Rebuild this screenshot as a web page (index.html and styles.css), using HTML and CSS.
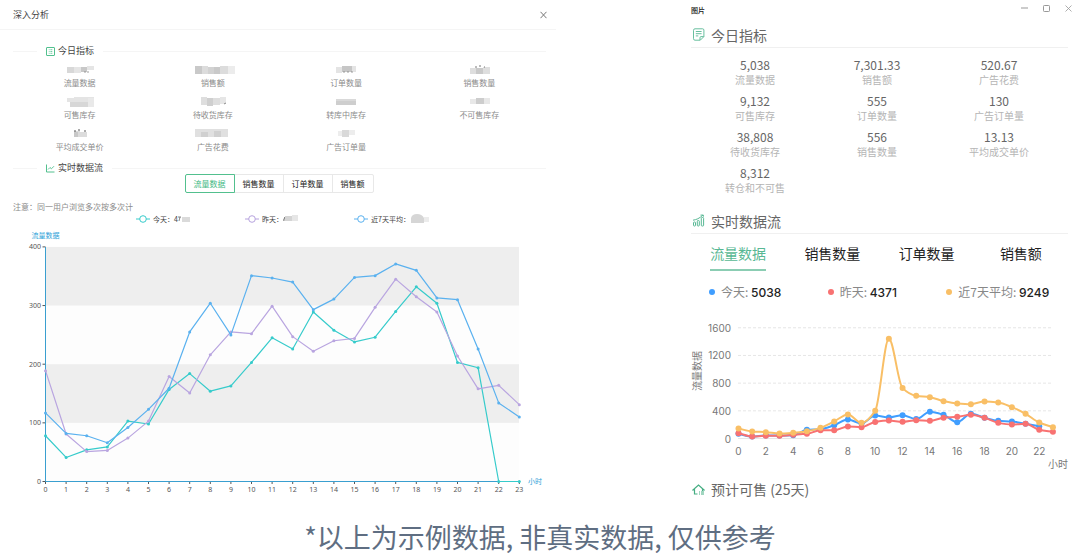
FILE: index.html
```html
<!DOCTYPE html>
<html lang="zh-CN">
<head>
<meta charset="utf-8">
<meta name="viewport" content="width=device-width, initial-scale=1">
<title>深入分析</title>
<link rel="stylesheet" href="styles.css">
</head>
<body>
<main class="compare">
  <section class="analysis">
    <header class="analysis-header">
      <h1 class="analysis-title">深入分析</h1>
      <button class="icon-button" type="button" aria-label="关闭"><svg width="7" height="8" viewBox="0 0 7 8"><path d="M.5 .8 6.5 7.2M6.5 .8 .5 7.2" fill="none" stroke="#777" stroke-width="1"/></svg></button>
    </header>
    <div class="analysis-body">
      <h2 class="divider divider-first">
        <svg width="9" height="9" viewBox="0 0 9 9" fill="none" stroke="#52c08e"><rect x=".5" y=".5" width="8" height="8" rx=".4"/><path d="M2.8 2.7h.8M4.4 2.7h1.9M2.8 4.5h.8M4.4 4.5h1.9M2.8 6.3h.8M4.4 6.3h1.9" stroke-width=".8"/></svg>
        <span>今日指标</span>
      </h2>
      <dl class="stats">
        <div class="stat"><dt>流量数据</dt><dd><svg class="mosaic" width="40" height="14" viewBox="0 0 40 14"><path fill="#d8d8d8" d="M7 4h7v6H7z"/><path fill="#e5e5e5" d="M14 4h7v6h-7zM27 3h7v4h-7z"/><path fill="#c8c8c8" d="M21 4h6v5h-6z"/><path d="M24 9h2M27 9h2" stroke="#777" stroke-width=".7"/></svg></dd></div>
        <div class="stat"><dt>销售额</dt><dd><svg class="mosaic" width="40" height="14" viewBox="0 0 40 14"><path fill="#c9c9c9" d="M2 3h7v8H2zM21 4h6v7h-6z"/><path fill="#dcdcdc" d="M9 3h6v8H9zM27 3h8v8h-8z"/><path fill="#d2d2d2" d="M15 4h6v7h-6z"/><path fill="#ececec" d="M35 3h7v8h-7z"/></svg></dd></div>
        <div class="stat"><dt>订单数量</dt><dd><svg class="mosaic" width="40" height="14" viewBox="0 0 40 14"><path fill="#e4e4e4" d="M10 4h6v6h-6zM26 3h4v6h-4z"/><path fill="#c6c6c6" d="M16 3h10v6H16z"/><path d="M17 9h2M21 9h2M25 9h2" stroke="#777" stroke-width=".7"/></svg></dd></div>
        <div class="stat"><dt>销售数量</dt><dd><svg class="mosaic" width="40" height="14" viewBox="0 0 40 14"><path fill="#dedede" d="M11 5h6v6h-6zM24 4h7v7h-7z"/><path fill="#c9c9c9" d="M17 5h7v6h-7z"/><path d="M16 4h2M20 3h2M25 4h1" stroke="#555" stroke-width=".8"/></svg></dd></div>
        <div class="stat"><dt>可售库存</dt><dd><svg class="mosaic" width="40" height="14" viewBox="0 0 40 14"><path fill="#e4e4e4" d="M7 3h7v4H7zM14 2h20v5H14z"/><path fill="#d7d7d7" d="M10 7h24v5H10z"/><path fill="#e9e9e9" d="M28 3h6v9h-6z"/></svg></dd></div>
        <div class="stat"><dt>待收货库存</dt><dd><svg class="mosaic" width="40" height="14" viewBox="0 0 40 14"><path fill="#dedede" d="M8 2h6v8H8zM20 3h7v7h-7z"/><path fill="#cfcfcf" d="M14 3h6v8h-6z"/><path fill="#e6e6e6" d="M27 2h6v7h-6z"/><path d="m31 9 2-1" stroke="#666" stroke-width=".7"/></svg></dd></div>
        <div class="stat"><dt>转库中库存</dt><dd><svg class="mosaic" width="40" height="14" viewBox="0 0 40 14"><path fill="#d9d9d9" d="M10 4h20v6H10z"/><path fill="#cecece" d="M10 6h20v4H10z"/></svg></dd></div>
        <div class="stat"><dt>不可售库存</dt><dd><svg class="mosaic" width="40" height="14" viewBox="0 0 40 14"><path fill="#e8e8e8" d="M11 4h6v5h-6zM25 3h6v6h-6z"/><path fill="#cdcdcd" d="M17 3h8v6h-8z"/></svg></dd></div>
        <div class="stat"><dt>平均成交单价</dt><dd><svg class="mosaic" width="40" height="14" viewBox="0 0 40 14"><path fill="#dcdcdc" d="M14 4h6v6h-6zM20 5h7v5h-7z"/><path fill="#c8c8c8" d="M14 5h4v5h-4z"/><path d="M14 4h2M18 3h2M24 4h2" stroke="#444" stroke-width=".9"/></svg></dd></div>
        <div class="stat"><dt>广告花费</dt><dd><svg class="mosaic" width="40" height="14" viewBox="0 0 40 14"><path fill="#e0e0e0" d="M2 2h33v8H2z"/><path fill="#d0d0d0" d="M8 5h7v5H8zM21 4h7v6h-7z"/></svg></dd></div>
        <div class="stat"><dt>广告订单量</dt><dd><svg class="mosaic" width="40" height="14" viewBox="0 0 40 14"><path fill="#d9d9d9" d="M16 3h7v7h-7z"/><path fill="#ededed" d="M12 4h4v5h-4zM23 3h6v5h-6z"/></svg></dd></div>
      </dl>
      <h2 class="divider">
        <svg width="9" height="9" viewBox="0 0 9 9" fill="none" stroke="#52c08e"><path d="M.5 .5v7.5H8.5"/><path d="m2 5.5 2-2 1.4 1.3L8 2.2" stroke-width=".9"/></svg>
        <span>实时数据流</span>
      </h2>
      <div class="segments">
        <button class="segment segment-active" type="button">流量数据</button>
        <button class="segment" type="button">销售数量</button>
        <button class="segment" type="button">订单数量</button>
        <button class="segment" type="button">销售额</button>
      </div>
      <p class="note">注意：同一用户浏览多次按多次计</p>
      <ul class="line-legend">
        <li><svg width="14" height="8" viewBox="0 0 14 8" fill="#fff" stroke="#36cbcb"><path d="M0 4h14"/><circle cx="7" cy="4" r="3.3"/></svg><span>今天：4</span><svg width="12" height="8" viewBox="0 0 12 8"><path d="M0 2h3M2 2 1 6" stroke="#555" stroke-width=".7"/><path fill="#dadada" d="M4 2h8v5H4z"/></svg></li>
        <li><svg width="14" height="8" viewBox="0 0 14 8" fill="#fff" stroke="#b6a2de"><path d="M0 4h14"/><circle cx="7" cy="4" r="3.3"/></svg><span>昨天：</span><svg width="15" height="8" viewBox="0 0 15 8"><path d="m0 6 2-4v4" fill="none" stroke="#555" stroke-width=".7"/><path fill="#d4d4d4" d="M2 1h7v5H2z"/><path fill="#e6e6e6" d="M9 0h6v6H9z"/></svg></li>
        <li><svg width="14" height="8" viewBox="0 0 14 8" fill="#fff" stroke="#5ab1ef"><path d="M0 4h14"/><circle cx="7" cy="4" r="3.3"/></svg><span>近7天平均：</span><svg width="19" height="10" viewBox="0 0 19 10"><path fill="#d6d6d6" d="M1 4q1-4 6-4t7 4v5H1z"/><path fill="#ececec" d="M14 3h5v5h-5z"/></svg></li>
      </ul>
    </div>
    <svg class="chart" id="flow-chart" viewBox="0 0 556 272" role="img" aria-label="流量数据"></svg>
  </section>

  <section class="picture">
    <header class="picture-header">
      <h1 class="picture-title">图片</h1>
      <div class="window-buttons">
        <button class="icon-button" type="button" aria-label="最小化"><svg width="7" height="7" viewBox="0 0 7 7"><path d="M0 3h7" stroke="#999"/></svg></button>
        <button class="icon-button" type="button" aria-label="最大化"><svg width="7" height="7" viewBox="0 0 7 7"><rect x=".5" y=".5" width="6" height="6" rx=".8" fill="none" stroke="#999"/></svg></button>
        <button class="icon-button" type="button" aria-label="关闭"><svg width="7" height="7" viewBox="0 0 7 7"><path d="m.5 .5 6 6m0-6-6 6" stroke="#999" stroke-width=".8"/></svg></button>
      </div>
    </header>
    <div class="picture-body">
      <h2 class="heading heading-line">
        <svg width="13" height="13" viewBox="0 0 13 13" fill="none" stroke="#58b894" stroke-width=".9"><path d="M3 .8h7.6a1.3 1.3 0 0 1 1.3 1.3v6.5l-3.6 3.6H3A1.5 1.5 0 0 1 1.5 10.7V2.3A1.5 1.5 0 0 1 3 .8z"/><path d="M8 12V9.6a1 1 0 0 1 1-1h2.8M3.8 3.5h5.8M3.8 5.7h5.8M3.8 7.9h2.5"/></svg>
        <span>今日指标</span>
      </h2>
      <dl class="figures">
        <div class="figure"><dt>流量数据</dt><dd>5,038</dd></div>
        <div class="figure"><dt>销售额</dt><dd>7,301.33</dd></div>
        <div class="figure"><dt>广告花费</dt><dd>520.67</dd></div>
        <div class="figure"><dt>可售库存</dt><dd>9,132</dd></div>
        <div class="figure"><dt>订单数量</dt><dd>555</dd></div>
        <div class="figure"><dt>广告订单量</dt><dd>130</dd></div>
        <div class="figure"><dt>待收货库存</dt><dd>38,808</dd></div>
        <div class="figure"><dt>销售数量</dt><dd>556</dd></div>
        <div class="figure"><dt>平均成交单价</dt><dd>13.13</dd></div>
        <div class="figure"><dt>转仓和不可售</dt><dd>8,312</dd></div>
      </dl>
      <h2 class="heading heading-line">
        <svg width="13" height="13" viewBox="0 0 13 13" fill="none" stroke="#58b894"><rect x="1.500" y="8" width="2" height="4" rx=".8"/><rect x="5.300" y="6.500" width="2" height="5.500" rx=".8"/><rect x="9.300" y="3.500" width="2.300" height="8.500" rx=".8"/><path d="M1 6.200C4 5.800 7.500 4.500 11 1M8.500 1.100h2.900v1.600"/></svg>
        <span>实时数据流</span>
      </h2>
      <div class="tabs">
        <button class="tab tab-active" type="button">流量数据</button>
        <button class="tab" type="button">销售数量</button>
        <button class="tab" type="button">订单数量</button>
        <button class="tab" type="button">销售额</button>
      </div>
      <ul class="dot-legend">
        <li><i class="dot dot-blue"></i>今天: <b>5038</b></li>
        <li><i class="dot dot-red"></i>昨天: <b>4371</b></li>
        <li><i class="dot dot-yellow"></i>近7天平均: <b>9249</b></li>
      </ul>
      <svg class="chart hour-chart" id="hour-chart" viewBox="0 0 377 162" role="img" aria-label="流量数据"></svg>
      <h2 class="heading">
        <svg width="13" height="13" viewBox="0 0 13 13" fill="none" stroke="#45ad82" stroke-width="1.2"><path d="M5.500 11H2.500V6.800H1.200L6.500 2l5.300 4.800h-1.300V8M7 9h1M9 9h3M7 11h1M9 11h3"/></svg>
        <span>预计可售 (25天)</span>
      </h2>
    </div>
  </section>
</main>
<footer class="disclaimer">*以上为示例数据, 非真实数据, 仅供参考</footer>
<script src="charts.js"></script>
</body>
</html>
```
FILE: styles.css
```css
* { box-sizing: border-box; }

body {
  margin: 0;
  background: #fff;
  color: #444;
  font-family: "Noto Sans CJK SC", sans-serif;
}

h1, h2, p, dl, dd, ul { margin: 0; padding: 0; font-weight: 400; }
ul { list-style: none; }

button {
  margin: 0;
  padding: 0;
  border: 0;
  background: none;
  font-family: inherit;
  cursor: pointer;
}

svg { display: block; flex: none; }

.compare {
  display: grid;
  grid-template-columns: 556fr 389fr;
  column-gap: 135px;
  align-items: start;
}

.icon-button { display: flex; }
.chart { width: 100%; height: auto; overflow: visible; }

/* Analysis dialog */
.analysis-header {
  display: flex;
  align-items: center;
  justify-content: space-between;
  height: 30px;
  padding: 0 9px 0 13px;
  border-bottom: 1px solid #f5f5f5;
}
.analysis-title { font-size: 9px; line-height: 12px; }
.analysis-body { padding: 0 10px 0 13px; }

.divider {
  display: flex;
  align-items: center;
  gap: 3px;
  font-size: 9px;
  line-height: 12px;
}
.divider-first { margin-top: 15px; }
.divider::before {
  content: "";
  width: 24px;
  margin-right: 6px;
  border-top: 1px solid #f5f5f5;
}
.divider::after {
  content: "";
  flex: 1;
  margin-left: 6px;
  border-top: 1px solid #f5f5f5;
}

.stats {
  display: grid;
  grid-template-columns: repeat(4, 1fr);
  row-gap: 6px;
  margin: 6px 0 9px;
}
.stat { display: flex; flex-direction: column-reverse; align-items: center; }
.stat dt { color: #8c8c8c; font-size: 8px; line-height: 12px; }
.mosaic { overflow: visible; }

.segments { display: flex; justify-content: center; }
.segment {
  height: 19px;
  margin-left: -1px;
  padding: 0 8px;
  border: 1px solid #e8e8e8;
  color: #222;
  font-size: 8px;
  line-height: 16px;
}
.segment:last-child { border-radius: 0 2px 2px 0; }
.segment-active {
  position: relative;
  border-color: #52c08e;
  border-radius: 2px 0 0 2px;
  color: #42b983;
}

.note { margin-top: 8px; color: #8c8c8c; font-size: 8px; line-height: 12px; }

.line-legend {
  display: grid;
  grid-template-columns: repeat(3, 109px);
  justify-content: center;
  margin-bottom: 1px;
  padding-left: 40px;
}
.line-legend li {
  display: flex;
  align-items: center;
  font-size: 7px;
  line-height: 12px;
}
.line-legend span { margin-left: 3px; }

/* Picture window */
.picture-header {
  display: flex;
  justify-content: space-between;
  height: 24px;
  padding: 5px 8px 0 0;
}
.picture-title { color: #111; font-size: 7px; font-weight: 500; line-height: 11px; }
.window-buttons { display: flex; align-items: flex-start; gap: 15px; }
.picture-body { padding-right: 12px; }

.heading {
  display: flex;
  align-items: center;
  gap: 6px;
  height: 24px;
  padding-left: 1px;
  color: #666;
  font-size: 14px;
  line-height: 20px;
}
.heading-line { padding-bottom: 2px; border-bottom: 1px solid #f0f0f0; }

.figures {
  display: grid;
  grid-template-columns: repeat(3, 1fr);
  row-gap: 6px;
  margin: 9px 8px 15px 3px;
  text-align: center;
}
.figure { display: flex; flex-direction: column-reverse; }
.figure dt { color: #b5b5b5; font-size: 10px; line-height: 14px; }
.figure dd { color: #666; font-size: 12px; line-height: 16px; }

.tabs { display: grid; grid-template-columns: repeat(4, 1fr); justify-items: center; margin-top: 8px; }
.tab {
  height: 29px;
  padding-bottom: 6px;
  border-bottom: 2px solid transparent;
  color: #222;
  font-size: 14px;
  line-height: 20px;
}
.tab-active { border-color: #8bcdb3; color: #58b894; }

.dot-legend {
  display: grid;
  grid-template-columns: repeat(3, 1fr);
  margin-top: 12px;
  padding: 0 3px 0 18px;
  color: #888;
  font-size: 12px;
  line-height: 18px;
}
.dot-legend li { white-space: nowrap; }
.dot-legend b { color: #222; font-family: Inter, sans-serif; font-size: 12px; font-weight: 500; }
.dot {
  display: inline-block;
  width: 6px;
  height: 6px;
  margin-right: 6px;
  border-radius: 50%;
  vertical-align: 2px;
}
.dot-blue { background: #409eff; }
.dot-red { background: #f87272; }
.dot-yellow { background: #f9bf66; }
.hour-chart { margin-top: 13px; }

/* Chart text */
.flow-tick { fill: #555; font-family: "Noto Sans", sans-serif; font-size: 7px; }
.flow-name { fill: #2d9fd8; font-size: 7px; }
.hour-tick { fill: #777; font-family: Inter, sans-serif; font-size: 10px; }
.hour-name { fill: #777; font-size: 10px; }

.disclaimer {
  margin-top: 16px;
  color: #5f6e82;
  font-size: 27px;
  line-height: 40px;
  text-align: center;
}
```
FILE: charts.js
```javascript
const NS = 'http://www.w3.org/2000/svg';

function add(svg, tag, attrs, text) {
  const node = document.createElementNS(NS, tag);
  for (const key in attrs) node.setAttribute(key, attrs[key]);
  if (text !== undefined) node.textContent = text;
  svg.appendChild(node);
}

function straight(points) {
  return 'M' + points.map(p => p.join(' ')).join('L');
}

// Cubic curve whose tangents never overshoot the neighbouring points.
function smooth(points) {
  const n = points.length;
  const slope = i => (points[i + 1][1] - points[i][1]) / (points[i + 1][0] - points[i][0]);
  const tangents = points.map((p, i) => {
    if (i === 0) return slope(0);
    if (i === n - 1) return slope(n - 2);
    const a = slope(i - 1), b = slope(i);
    return a * b <= 0 ? 0 : 2 * a * b / (a + b);
  });
  let d = 'M' + points[0].join(' ');
  for (let i = 0; i < n - 1; i++) {
    const h = (points[i + 1][0] - points[i][0]) / 3;
    d += 'C' + [points[i][0] + h, points[i][1] + tangents[i] * h,
      points[i + 1][0] - h, points[i + 1][1] - tangents[i + 1] * h,
      points[i + 1][0], points[i + 1][1]].join(' ');
  }
  return d;
}

function drawSeries(svg, series, x, y, path, width, radius) {
  for (const s of series) {
    const points = s.values.map((v, i) => [x(i), y(v)]);
    add(svg, 'path', { d: path(points), fill: 'none', stroke: s.color, 'stroke-width': width, 'stroke-linejoin': 'round' });
    for (const p of points) add(svg, 'circle', { cx: p[0], cy: p[1], r: radius, fill: s.color });
  }
}

function drawFlow() {
  const svg = document.getElementById('flow-chart');
  const x = i => 45.5 + i * 20.6;
  const y = v => 255.5 - v * 0.5865;
  add(svg, 'rect', { x: 45, y: y(400), width: 474, height: 234, fill: '#fdfdfd' });
  for (const v of [400, 200]) add(svg, 'rect', { x: 45, y: y(v), width: 474, height: 58.65, fill: '#eee' });
  for (let v = 0; v <= 400; v += 100) {
    add(svg, 'path', { d: `M42.5 ${y(v)}h3`, stroke: '#555' });
    add(svg, 'text', { x: 41, y: y(v) + 2.5, 'text-anchor': 'end', class: 'flow-tick' }, v);
  }
  for (let i = 0; i < 24; i++) {
    add(svg, 'path', { d: `M${x(i)} 255v3`, stroke: '#555' });
    add(svg, 'text', { x: x(i), y: 266, 'text-anchor': 'middle', class: 'flow-tick' }, i);
  }
  add(svg, 'path', { d: 'M45.5 21v234.5H519.5', fill: 'none', stroke: '#3a9fd0' });
  add(svg, 'text', { x: 45.5, y: 12, 'text-anchor': 'middle', class: 'flow-name' }, '流量数据');
  add(svg, 'text', { x: 528, y: 258, class: 'flow-name' }, '小时');
  drawSeries(svg, [
    { color: '#36cbcb', values: [78, 41, 54, 59, 103, 98, 157, 184, 154, 163, 203, 245, 226, 289, 258, 238, 246, 290, 332, 304, 203, 194, 0, 0] },
    { color: '#b9a5e0', values: [189, 81, 51, 53, 74, 103, 179, 151, 216, 255, 252, 299, 247, 222, 240, 244, 297, 345, 315, 289, 214, 158, 164, 131] },
    { color: '#5ab1ef', values: [117, 82, 78, 66, 92, 123, 159, 255, 304, 250, 351, 347, 340, 293, 311, 348, 351, 371, 360, 313, 310, 226, 134, 110] }
  ], x, y, straight, 1.2, 1.5);
}

function drawHours() {
  const svg = document.getElementById('hour-chart');
  const x = i => 47.5 + i * 13.67;
  const y = v => 123.5 - v * 0.0692;
  for (let v = 0; v <= 1600; v += 400) {
    const line = { d: `M47 ${y(v)}H361`, stroke: '#e6e6e6' };
    if (v) line['stroke-dasharray'] = '3 2';
    add(svg, 'path', line);
    add(svg, 'text', { x: 40, y: y(v) + 4, 'text-anchor': 'end', class: 'hour-tick' }, v);
  }
  for (let i = 0; i < 24; i += 2) {
    add(svg, 'text', { x: x(i), y: 140, 'text-anchor': 'middle', class: 'hour-tick' }, i);
  }
  add(svg, 'text', { x: 357, y: 153, class: 'hour-name' }, '小时');
  add(svg, 'text', { transform: 'translate(10 56) rotate(-90)', 'text-anchor': 'middle', class: 'hour-name' }, '流量数据');
  drawSeries(svg, [
    { color: '#409eff', values: [67, 30, 45, 45, 48, 125, 135, 193, 275, 217, 333, 304, 337, 280, 386, 342, 236, 357, 299, 255, 246, 212, 178] },
    { color: '#f87272', values: [77, 28, 40, 40, 53, 67, 120, 120, 173, 164, 240, 260, 241, 265, 255, 299, 313, 342, 299, 226, 202, 212, 125, 96] },
    { color: '#f9bf66', values: [145, 101, 92, 72, 82, 106, 154, 246, 347, 226, 400, 1441, 728, 617, 597, 540, 506, 496, 535, 520, 453, 357, 231, 164] }
  ], x, y, smooth, 2, 3);
}

drawFlow();
drawHours();
```
